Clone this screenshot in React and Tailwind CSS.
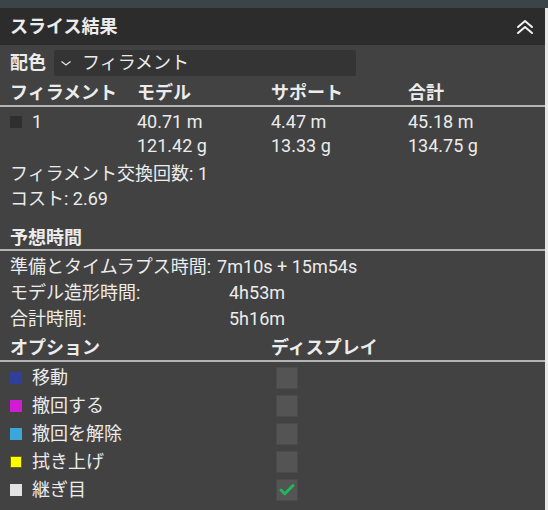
import { Check } from "lucide-react";

const font = { fontFamily: 'Roboto, "Noto Sans CJK JP", sans-serif' };

function Rule() {
  return <div className="h-[2px] shrink-0 bg-[#b4b4b4]" />;
}

function Swatch({ color }) {
  return <div className={`w-3 h-3 shrink-0 ${color}`} />;
}

const options = [
  { label: "移動", color: "bg-[#2f3f9a]", on: false },
  { label: "撤回する", color: "bg-[#d21cd4]", on: false },
  { label: "撤回を解除", color: "bg-[#3aa6da]", on: false },
  { label: "拭き上げ", color: "bg-[#ffff00] border border-[#6b6b00]", on: false },
  { label: "継ぎ目", color: "bg-[#e2e2e2]", on: true },
];

export default function App() {
  return (
    <div className="w-[548px] h-[510px] bg-[#3b4548] flex flex-col text-[#ececec] text-[18px] leading-none overflow-hidden" style={font}>
      <div className="h-2 shrink-0" />
      <div className="flex flex-1 min-h-0">
        <div className="w-[545px] flex flex-col bg-[#424242]">
          {/* header */}
          <div className="h-[37px] shrink-0 bg-[#2c2c2c] flex items-center justify-between pl-[10px] pr-[10px]">
            <span className="font-bold">スライス結果</span>
            <svg width="20" height="16" viewBox="0 0 20 16" fill="none" stroke="#f2f2f2" strokeWidth="2" strokeLinecap="round" strokeLinejoin="round">
              <path d="M3 8 L10 2 L17 8" />
              <path d="M3 14 L10 8 L17 14" />
            </svg>
          </div>

          {/* colour scheme */}
          <div className="flex items-center gap-[8px] pl-[10px] h-[36px] shrink-0">
            <span className="font-bold">配色</span>
            <div className="w-[302px] h-[26px] bg-[#343434] rounded-[2px] flex items-center pl-[6px] gap-[10px]">
              <svg width="12" height="8" viewBox="0 0 12 8" fill="none" stroke="#e6e6e6" strokeWidth="1.3">
                <path d="M1.5 2.5 L6 6 L10.5 2.5" />
              </svg>
              <span>フィラメント</span>
            </div>
          </div>

          {/* filament table */}
          <div className="grid grid-cols-[127px_134px_137px_1fr] pl-[10px] h-[24px] shrink-0 items-center font-bold">
            <span>フィラメント</span>
            <span>モデル</span>
            <span>サポート</span>
            <span>合計</span>
          </div>
          <Rule />
          <div className="grid grid-cols-[127px_134px_137px_1fr] auto-rows-[24px] items-center pl-[10px] pt-[3px]">
            <span className="flex items-center gap-[10px]"><Swatch color="bg-[#2f2f2f]" />1</span>
            <span>40.71 m</span>
            <span>4.47 m</span>
            <span>45.18 m</span>
            <span />
            <span>121.42 g</span>
            <span>13.33 g</span>
            <span>134.75 g</span>
          </div>
          <div className="pl-[10px] pt-[3px] flex flex-col">
            <span className="h-[25px] flex items-center">フィラメント交換回数: 1</span>
            <span className="h-[25px] flex items-center">コスト: 2.69</span>
          </div>

          {/* time */}
          <div className="pl-[10px] pt-[14px] h-[38px] shrink-0 flex items-end pb-[2px] font-bold">予想時間</div>
          <Rule />
          <div className="pl-[10px] pt-[3px] flex flex-col">
            <div className="flex items-center h-[26px]">
              <span>準備とタイムラプス時間:</span>
              <span className="pl-[6px]">7m10s + 15m54s</span>
            </div>
            <div className="flex items-center h-[26px]">
              <span className="w-[219px]">モデル造形時間:</span>
              <span>4h53m</span>
            </div>
            <div className="flex items-center h-[26px]">
              <span className="w-[219px]">合計時間:</span>
              <span>5h16m</span>
            </div>
          </div>

          {/* options */}
          <div className="flex items-center pl-[10px] mt-[4px] h-[24px] shrink-0 font-bold">
            <span className="w-[261px]">オプション</span>
            <span>ディスプレイ</span>
          </div>
          <Rule />
          <div className="flex flex-col pl-[10px] pt-[2px]">
            {options.map((o) => (
              <div key={o.label} className="flex items-center h-[28px]">
                <div className="w-[266px] flex items-center gap-[10px]">
                  <Swatch color={o.color} />
                  <span>{o.label}</span>
                </div>
                <div className="w-[22px] h-[22px] bg-[#545454] border border-[#4a4a4a] flex items-center justify-center">
                  {o.on && <Check size={18} strokeWidth={4} className="text-[#1fb85a]" />}
                </div>
              </div>
            ))}
          </div>
        </div>
        <div className="flex-1 bg-[#e8e8e8]" />
      </div>
    </div>
  );
}
